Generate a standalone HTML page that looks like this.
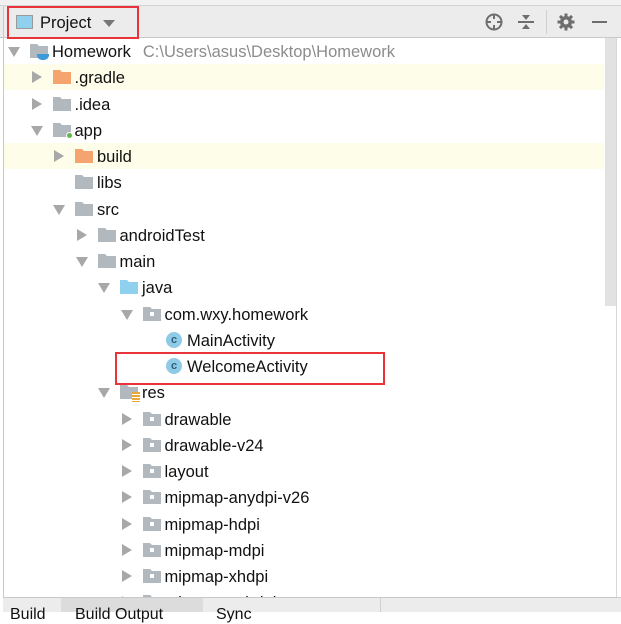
<!DOCTYPE html>
<html><head><meta charset="utf-8"><style>
*{margin:0;padding:0;box-sizing:border-box}
body{width:621px;height:612px;overflow:hidden;background:#fff;font-family:"Liberation Sans",sans-serif;font-size:16.5px;color:#111;position:relative}
.top{position:absolute;left:0;top:0;width:621px;height:6px;background:#f2f2f2;border-bottom:1px solid #d4d4d4}
.hdr{position:absolute;left:0;top:6px;width:621px;height:32px;background:#ececec;border-bottom:1px solid #c9c9c9}
.lb{position:absolute;left:3px;top:6px;width:1px;height:606px;background:#c9c9c9}
.row{position:absolute;left:4px;width:600px;height:26px;line-height:26px;white-space:nowrap}
.hl{background:#fdfde9}
.t{position:absolute;top:1px}
.ar{position:absolute;width:0;height:0}
.r{border-top:6px solid transparent;border-bottom:6px solid transparent;border-left:10px solid #a8a8a8;top:7px}
.d{border-left:6px solid transparent;border-right:6px solid transparent;border-top:10px solid #a8a8a8;top:9px}
.f{position:absolute;top:6px;width:18px;height:14px}
.box{position:absolute;border:2px solid #e8333a}
</style></head><body>
<div class="top"></div>
<div class="hdr">
 <div style="position:absolute;left:16px;top:9px;width:17px;height:14px;border:1px solid #9a9a9a;background:#8fd0ee"></div>
 <div style="position:absolute;left:40px;top:6px;line-height:22px;font-size:16.5px">Project</div>
 <div style="position:absolute;left:103px;top:14px;border-left:6px solid transparent;border-right:6px solid transparent;border-top:7px solid #777"></div>
 <svg style="position:absolute;left:484px;top:6px" width="20" height="20" viewBox="0 0 20 20"><circle cx="10" cy="10" r="7.5" fill="none" stroke="#6e6e6e" stroke-width="2"/><path d="M10 2v5M10 13v5M2 10h5M13 10h5" stroke="#6e6e6e" stroke-width="2"/></svg>
 <svg style="position:absolute;left:516px;top:6px" width="20" height="20" viewBox="0 0 20 20"><path d="M2 10h16" stroke="#6e6e6e" stroke-width="2"/><path d="M6 3h8l-4 5zM6 17h8l-4-5z" fill="#6e6e6e"/></svg>
 <div style="position:absolute;left:546px;top:4px;width:1px;height:24px;background:#d0d0d0"></div>
 <svg style="position:absolute;left:557px;top:7px" width="18" height="18" viewBox="0 0 18 18"><g fill="#6e6e6e"><circle cx="9" cy="9" r="6"/><rect x="7.5" y="0.5" width="3" height="17"/><rect x="0.5" y="7.5" width="17" height="3"/><rect x="7.5" y="0.5" width="3" height="17" transform="rotate(45 9 9)"/><rect x="7.5" y="0.5" width="3" height="17" transform="rotate(-45 9 9)"/></g><circle cx="9" cy="9" r="2.5" fill="#ececec"/></svg>
 <div style="position:absolute;left:592px;top:15px;width:15px;height:2px;background:#6e6e6e"></div>
</div>
<div class="lb"></div>
<div style="position:absolute;left:605px;top:38px;width:11px;height:268px;background:#e2e2e2"></div>
<div style="position:absolute;left:616px;top:38px;width:1px;height:560px;background:#d8d8d8"></div>

<div id="tree"></div>

<div style="position:absolute;left:3px;top:597px;width:618px;height:15px;background:#ececec;border-top:1px solid #c9c9c9;overflow:hidden"></div>
<div style="position:absolute;left:61px;top:598px;width:142px;height:14px;background:#dcdcdc"></div>
<div style="position:absolute;left:380px;top:598px;width:1px;height:14px;background:#d0d0d0"></div>
<div style="position:absolute;left:10px;top:606px;font-size:16px;line-height:18px">Build</div>
<div style="position:absolute;left:75px;top:606px;font-size:16px;line-height:18px">Build Output</div>
<div style="position:absolute;left:216px;top:606px;font-size:16px;line-height:18px">Sync</div>

<div class="box" style="left:7px;top:6px;width:132px;height:33px"></div>
<div class="box" style="left:115px;top:352px;width:270px;height:33px"></div>

<script>
var items=[
[0,'d','pm','Homework','C:\\Users\\asus\\Desktop\\Homework'],
[1,'r','o','.gradle','',1],
[1,'r','g','.idea'],
[1,'d','mod','app'],
[2,'r','o','build','',1],
[2,'','g','libs'],
[2,'d','g','src'],
[3,'r','g','androidTest'],
[3,'d','g','main'],
[4,'d','b','java'],
[5,'d','p','com.wxy.homework'],
[6,'','c','MainActivity'],
[6,'','c','WelcomeActivity'],
[4,'d','res','res'],
[5,'r','p','drawable'],
[5,'r','p','drawable-v24'],
[5,'r','p','layout'],
[5,'r','p','mipmap-anydpi-v26'],
[5,'r','p','mipmap-hdpi'],
[5,'r','p','mipmap-mdpi'],
[5,'r','p','mipmap-xhdpi'],
[5,'r','p','mipmap-xxhdpi']];
var h='';
function folder(c){return '<svg class="f" style="left:0" viewBox="0 0 18 14"><path d="M0 0h7l2 2h9v12H0z" fill="'+c+'"/></svg>';}
items.forEach(function(it,n){
 var L=it[0],top=38+26.25*n,x=22.5*L;
 var s='<div class="row'+(it[5]?' hl':'')+'" style="top:'+top+'px">';
 if(it[1]) s+='<div class="ar '+it[1]+'" style="left:'+(x+(it[1]=='r'?5:4))+'px"></div>';
 var fx=x+26;
 var k=it[2];
 if(k=='o') s+='<div style="position:absolute;left:'+fx+'px;top:0">'+folder('#f6a46f')+'</div>';
 else if(k=='g'||k=='pm'||k=='mod'||k=='res') {
  s+='<div style="position:absolute;left:'+fx+'px;top:0">'+folder('#b1b9bf')+'</div>';
  if(k=='pm') s+='<div style="position:absolute;left:'+(fx+7)+'px;top:16px;width:12px;height:6px;background:#3d9ad8;border-radius:0 0 5px 5px"></div>';
  if(k=='mod') s+='<div style="position:absolute;left:'+(fx+13)+'px;top:15px;width:7px;height:7px;background:#5cbc4a;border-radius:50%;border:1px solid #fff"></div>';
  if(k=='res') s+='<div style="position:absolute;left:'+(fx+12)+'px;top:13px;width:8px;height:10px;background:repeating-linear-gradient(#e8a93a 0 2px,#fff 2px 3px)"></div>';
 }
 else if(k=='b') s+='<div style="position:absolute;left:'+fx+'px;top:0">'+folder('#8fd0ee')+'</div>';
 else if(k=='p') s+='<div style="position:absolute;left:'+fx+'px;top:0">'+folder('#b1b9bf')+'<div style="position:absolute;left:7px;top:11px;width:4px;height:4px;background:#fff"></div></div>';
 else if(k=='c') s+='<div style="position:absolute;left:'+(fx+1)+'px;top:5px;width:16px;height:16px;border-radius:50%;background:#8fcbe6;color:#2f5f7a;font-size:11px;line-height:16px;text-align:center;font-weight:bold">c</div>';
 s+='<span class="t" style="left:'+(x+48)+'px">'+it[3]+(it[4]?'<span style="color:#8c8c8c;margin-left:12px">'+it[4]+'</span>':'')+'</span></div>';
 h+=s;
});
document.getElementById('tree').innerHTML=h;
</script>
</body></html>
